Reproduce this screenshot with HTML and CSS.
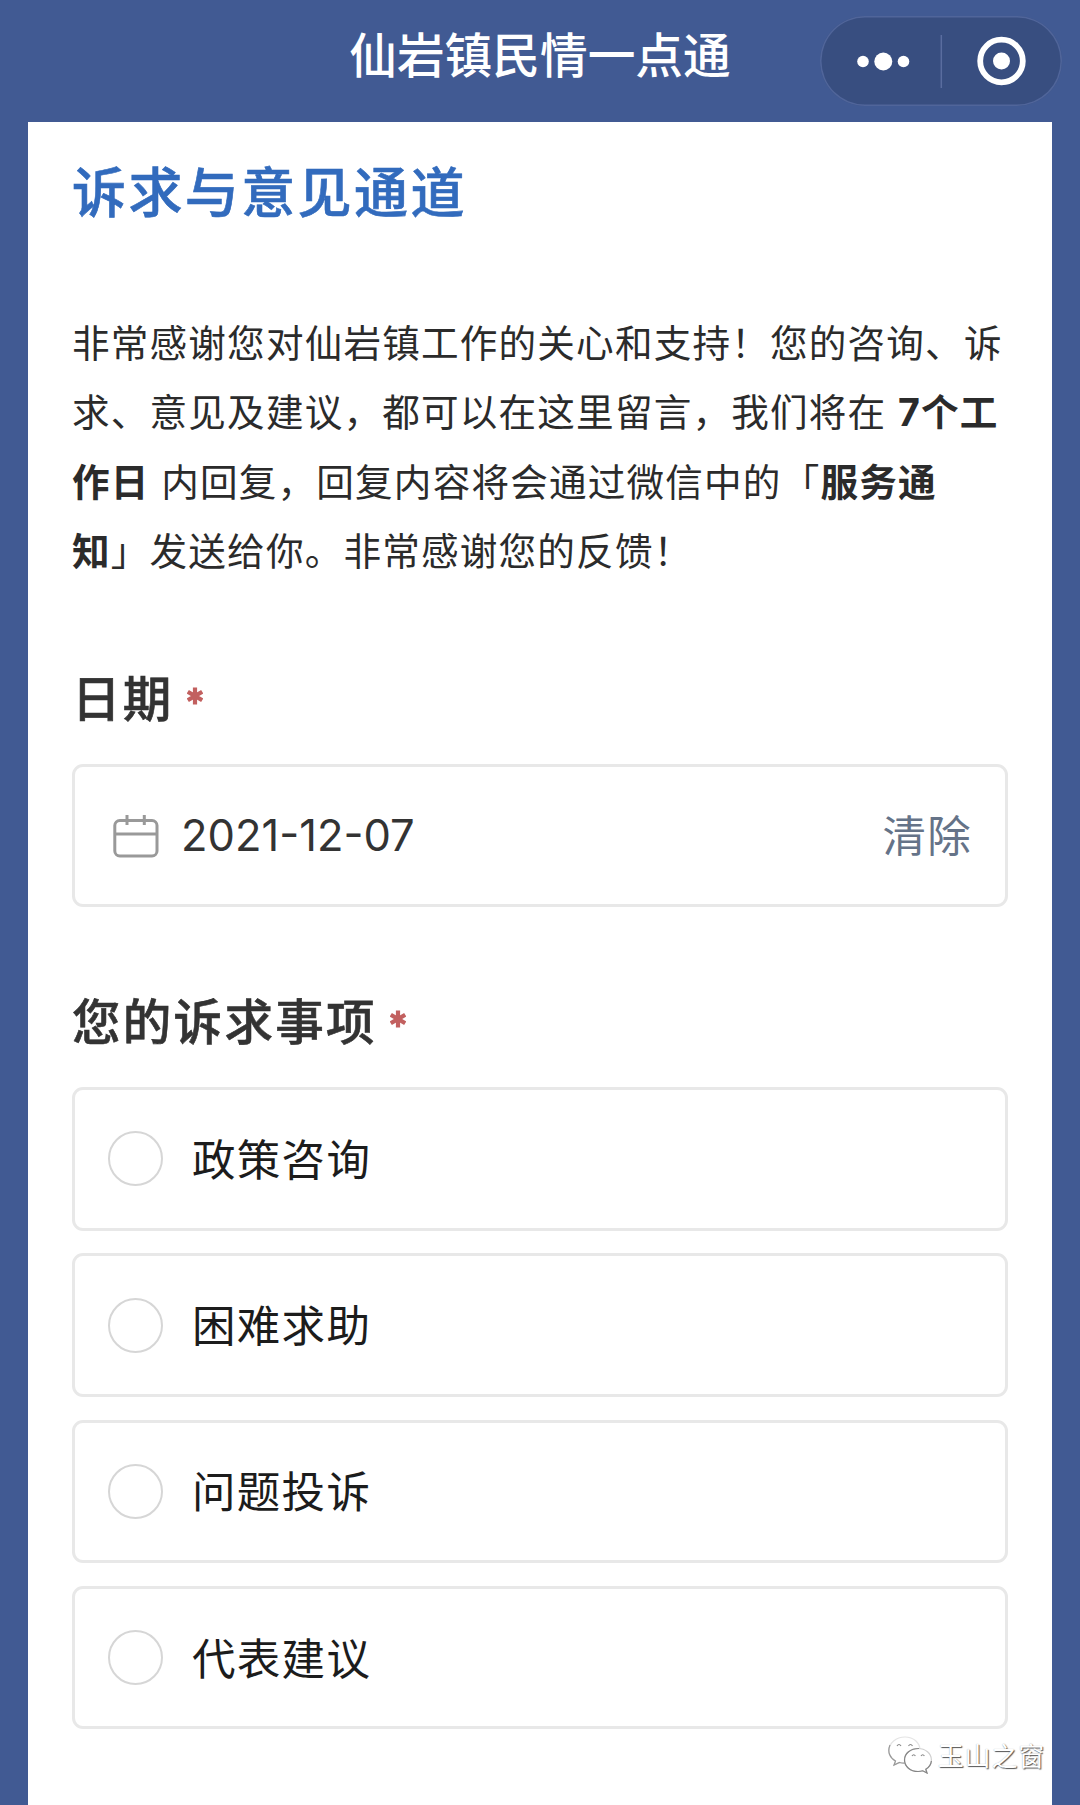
FILE: index.html
```html
<!DOCTYPE html>
<html lang="zh-CN">
<head>
    <meta charset="UTF-8">
    <meta name="viewport" content="width=device-width, initial-scale=1.0">
    <title>仙岩镇民情一点通</title>
    <link rel="stylesheet" href="styles.css">
</head>
<body>
    <header class="navbar">
        <div class="navbar-title">仙岩镇民情一点通</div>
        <div class="capsule">
            <svg class="capsule-icons" viewBox="0 0 242 90">
                <g fill="#fff">
                    <circle cx="43" cy="45.500" r="5.800"/>
                    <circle cx="63.300" cy="45.500" r="9"/>
                    <circle cx="83.500" cy="45.500" r="5.800"/>
                    <circle cx="181.500" cy="45" r="8.500"/>
                </g>
                <path d="M121.300 19v53" stroke="#5a6d9f" stroke-width="1.5"/>
                <circle cx="181.500" cy="45" r="21.300" fill="none" stroke="#fff" stroke-width="5.800"/>
            </svg>
        </div>
    </header>

    <main class="card">
        <h1 class="title">诉求与意见通道</h1>

        <p class="intro">非常感谢您对仙岩镇工作的关心和支持！您的咨询、诉<br>求、意见及建议，都可以在这里留言，我们将在 <b><span class="num">7</span>个工</b><br><b>作日</b> 内回复，回复内容将会通过微信中的「<b>服务通</b><br><b>知</b>」发送给你。非常感谢您的反馈！</p>

        <form>
            <div class="label label-date">日期
                <svg class="required" viewBox="0 0 16 18"><path d="M8 .5v17M.8 4.700l14.400 8.600M15.200 4.700L.8 13.300"/></svg>
            </div>
            <div class="box date-box">
                <svg class="calendar" viewBox="0 0 46 43" fill="none" stroke="#999" stroke-width="3">
                    <rect x="1.800" y="5.500" width="42.200" height="35.500" rx="5"/>
                    <path d="M2 19h42M14 0v10M31.300 0v10"/>
                </svg>
                <span class="date">2021-12-07</span>
                <span class="clear">清除</span>
            </div>

            <div class="label label-topic">您的诉求事项
                <svg class="required" viewBox="0 0 16 18"><path d="M8 .5v17M.8 4.700l14.400 8.600M15.200 4.700L.8 13.300"/></svg>
            </div>
            <div class="options">
                <div class="box option"><span class="radio"></span><span class="option-text">政策咨询</span></div>
                <div class="box option"><span class="radio"></span><span class="option-text">困难求助</span></div>
                <div class="box option"><span class="radio"></span><span class="option-text">问题投诉</span></div>
                <div class="box option"><span class="radio"></span><span class="option-text">代表建议</span></div>
            </div>
        </form>
    </main>

    <div class="watermark">
        <svg class="wechat" viewBox="0 0 46 38" fill="#fff" stroke-width="1.2">
            <path stroke="#e4e4e4" d="M17 1C8 1 1 7 1 14.500c0 4.500 2.500 8 6.500 10.500L6 29l5.500-2.500c2 .6 4 .8 6.500.6 8-.6 14-6 14-13C32 6.500 25.500 1 17 1z"/>
            <path stroke="#999" fill="none" d="M2 9c-3 7 0 13 5.500 16L6 29l5.500-2.500q3 .8 6 .6"/>
            <path stroke="#d0d0d0" d="M30 12.500c-7.500 0-13.500 5-13.500 11.500S22.500 35.500 30 35.500c1.700 0 3.300-.2 4.800-.7L39 37l-1.200-3.700c3.500-2.100 5.600-5.400 5.600-9.300 0-6.500-6-11.500-13.400-11.500z"/>
            <path stroke="#858585" fill="none" d="M31 12.500c-8.500 0-14.500 5-14.500 11.500S22.500 35.500 30 35.500c1.700 0 3.300-.2 4.800-.7L39 37l-1.200-3.700q5-3 5.600-8.300"/>
            <path stroke="#888" fill="none" d="M9 10q2-3 4 0M20.500 10q2-3 4 0M24 20q1.700-2.500 3.400 0M33 20q1.700-2.500 3.400 0"/>
        </svg>
        <span>玉山之窗</span>
    </div>
</body>
</html>
```

FILE: styles.css
```css
:root {
    --nav-blue: #415a93;
    --capsule-blue: #384e80;
    --title-blue: #326bbd;
    --text: #2b2b2b;
    --line: #e8e8e8;
}

* {
    box-sizing: border-box;
}

body {
    margin: 0;
    height: 1805px;
    position: relative;
    overflow: hidden;
    display: flex;
    flex-direction: column;
    background-color: var(--nav-blue);
    color: var(--text);
    font-family: "Noto Sans CJK SC", sans-serif;
}

.navbar {
    height: 122px;
    flex: none;
    display: grid;
    grid-template-columns: 1fr auto 1fr;
    padding: 16px 18px 0;
}

.navbar-title {
    grid-column: 2;
    height: 74px;
    line-height: 74px;
    font-size: 47.7px;
    font-weight: 500;
    color: #fff;
}

.capsule {
    justify-self: end;
    width: 242px;
    height: 90px;
    border-radius: 45px;
    background-color: var(--capsule-blue);
    box-shadow: inset 0 0 0 1.5px #50659a;
}

.capsule-icons {
    display: block;
    width: 242px;
    height: 90px;
}

.card {
    flex: 1;
    margin: 0 28px;
    padding: 28px 44px 0;
    background-color: #fff;
}

.title {
    margin: 0;
    height: 80px;
    line-height: 80px;
    font-size: 54px;
    font-weight: 500;
    letter-spacing: 2.4px;
    color: var(--title-blue);
    -webkit-text-stroke: 0.6px var(--title-blue);
}

.intro {
    margin: 76px 0 0;
    font-size: 37.6px;
    line-height: 69.3px;
    letter-spacing: 1.2px;
    word-spacing: 2px;
    white-space: nowrap;
}

.intro b {
    font-weight: 700;
}

.num {
    font-family: Inter, sans-serif;
    line-height: 1;
}

.label {
    display: flex;
    align-items: center;
    height: 70px;
    line-height: 70px;
    font-size: 48.5px;
    font-weight: 500;
    letter-spacing: 2.3px;
    color: #333;
    -webkit-text-stroke: 0.6px #333;
}

.label-date {
    margin-top: 78px;
}

.label-topic {
    margin-top: 77px;
}

.required {
    width: 16px;
    height: 18px;
    margin: 0 0 1px 13px;
    fill: none;
    stroke: #c2605f;
    stroke-width: 4.2;
}

.box {
    display: flex;
    align-items: center;
    height: 143.5px;
    border: 3px solid var(--line);
    border-radius: 11px;
    font-size: 43.5px;
    letter-spacing: 1.3px;
}

.date-box {
    margin-top: 32.5px;
    padding: 0 33px 0 38px;
}

.calendar {
    width: 46px;
    height: 43px;
    margin-top: 3px;
}

.date {
    margin-left: 22px;
    font-family: Inter, sans-serif;
    font-size: 43.5px;
    letter-spacing: 0;
    color: #333;
}

.clear {
    margin-left: auto;
    padding-bottom: 4px;
    color: #657388;
}

.options {
    display: flex;
    flex-direction: column;
    gap: 22.7px;
    margin-top: 33px;
}

.option {
    padding-left: 33px;
    color: #1c1c1c;
}

.option-text {
    padding-bottom: 3px;
}

.radio {
    width: 55px;
    height: 55px;
    margin-right: 29px;
    border: 2.5px solid #d6d6d6;
    border-radius: 50%;
}

/* account signature over the lower right corner */
.watermark {
    position: absolute;
    right: 35px;
    bottom: 30px;
    display: flex;
    align-items: center;
    gap: 4px;
    font-size: 26px;
    line-height: 40px;
    letter-spacing: 0.8px;
    color: #fff;
    text-shadow: 1px 1px 1px #555, 0 0 1px #aaa;
}

.wechat {
    width: 46px;
    height: 38px;
}
```
